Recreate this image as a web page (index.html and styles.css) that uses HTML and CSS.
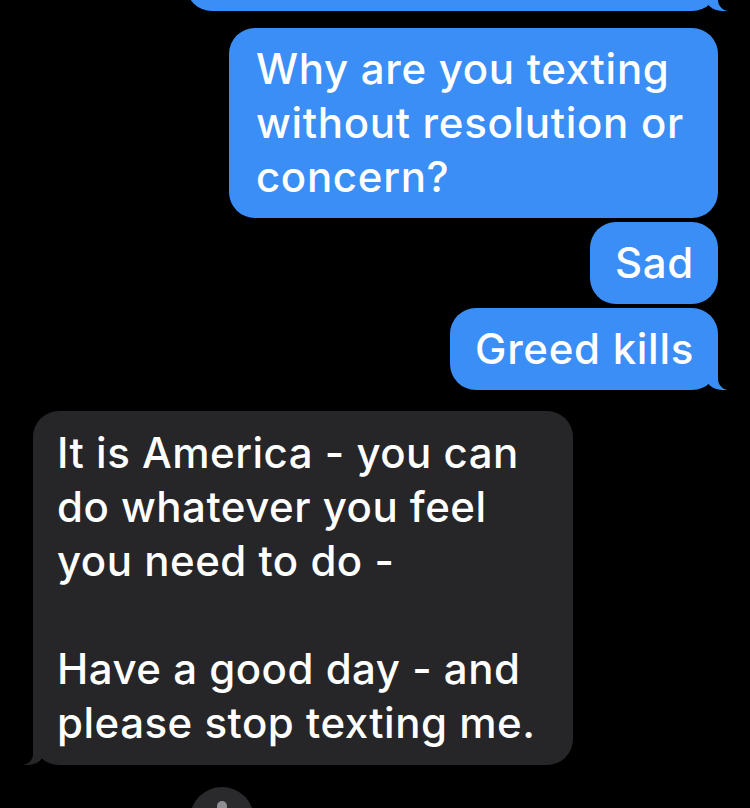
FILE: index.html
```html
<!DOCTYPE html>
<html lang="en">
<head>
  <meta charset="UTF-8" />
  <title>Messages</title>
  <meta name="viewport" content="width=device-width, initial-scale=1.0" />
  <link rel="stylesheet" href="styles.css">
</head>
<body>
  <main class="thread">
    <!-- previous message, scrolled mostly out of view -->
    <div class="bubble out tail clipped">&nbsp;</div>

    <div class="group out-group">
      <div class="bubble out multi">Why are you texting<br>without resolution or<br>concern?</div>
      <div class="bubble out">Sad</div>
      <div class="bubble out tail">Greed kills</div>
    </div>

    <div class="group in-group">
      <div class="bubble in multi tail">It is America - you can<br>do whatever you feel<br>you need to do -<br><br>Have a good day - and<br>please stop texting me.</div>
    </div>

    <div class="scroll-btn">
      <span class="arrow"></span>
    </div>
  </main>
</body>
</html>
```

FILE: styles.css
```css
:root {
  --bg-color: #000000;
  --blue: #3a8ef6;
  --gray: #262629;
  --text-color: #ffffff;
}

* {
  box-sizing: border-box;
  margin: 0;
  padding: 0;
}

html, body {
  height: 100%;
}

body {
  background-color: var(--bg-color);
  color: var(--text-color);
  font-family: 'Inter', 'Helvetica Neue', Arial, sans-serif;
  overflow: hidden;
}

.thread {
  display: flex;
  flex-direction: column;
  padding: 0 32px 0 33px;
}

.group {
  display: flex;
  flex-direction: column;
  gap: 4px;
}

.out-group {
  align-items: flex-end;
  margin-top: 17px;
}

.in-group {
  align-items: flex-start;
  margin-top: 21px;
}

.bubble {
  position: relative;
  padding: 14px 24px 14px 25px;
  border-radius: 26px;
  font-size: 42px;
  font-weight: 500;
  line-height: 54px;
  letter-spacing: 0.7px;
}

.bubble.multi {
  padding-right: 34px;
}

.bubble.out {
  background-color: var(--blue);
}

.bubble.out.multi {
  padding-left: 27px;
}

.bubble.in {
  background-color: var(--gray);
  padding: 15px 38px 15px 24px;
  letter-spacing: 0.5px;
}

.clipped {
  align-self: flex-end;
  width: 532px;
  margin-top: -71px;
}

/* tails */
.tail.out::before,
.tail.out::after,
.tail.in::before,
.tail.in::after {
  content: "";
  position: absolute;
  bottom: 0;
  height: 26px;
}

.tail.out::before {
  right: -9px;
  width: 22px;
  background-color: var(--blue);
  border-bottom-left-radius: 17px 15px;
}

.tail.out::after {
  right: -28px;
  width: 28px;
  background-color: var(--bg-color);
  border-bottom-left-radius: 11px;
}

.tail.in::before {
  left: -10px;
  width: 22px;
  background-color: var(--gray);
  border-bottom-right-radius: 17px 15px;
}

.tail.in::after {
  left: -28px;
  width: 28px;
  background-color: var(--bg-color);
  border-bottom-right-radius: 11px;
}

.scroll-btn {
  width: 64px;
  height: 64px;
  margin: 22px 0 0 157px;
  border-radius: 50%;
  background-color: #2a2a2d;
  display: flex;
  justify-content: center;
  padding-top: 14px;
}

.arrow {
  width: 10px;
  height: 14px;
  background-color: #8e8e93;
  border-radius: 5px 5px 2px 2px;
}
```
